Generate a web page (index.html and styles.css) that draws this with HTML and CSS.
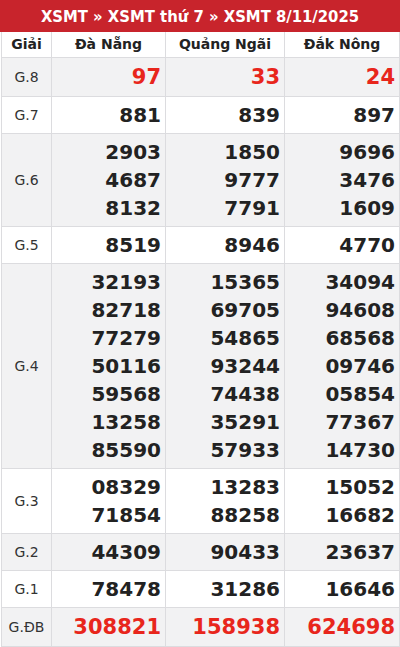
FILE: index.html
```html
<!DOCTYPE html>
<html lang="vi">
<head>
<meta charset="utf-8">
<link rel="stylesheet" href="styles.css">
</head>
<body>
<div class="box">
  <h2 class="title">XSMT » XSMT thứ 7 » XSMT 8/11/2025</h2>
  <table class="kq">
    <colgroup>
      <col class="c-g"><col class="c-1"><col class="c-2"><col class="c-3">
    </colgroup>
    <thead>
      <tr><th>Giải</th><th>Đà Nẵng</th><th>Quảng Ngãi</th><th>Đắk Nông</th></tr>
    </thead>
    <tbody>
      <tr class="alt"><td class="g">G.8</td><td class="n red">97</td><td class="n red">33</td><td class="n red">24</td></tr>
      <tr><td class="g">G.7</td><td class="n">881</td><td class="n">839</td><td class="n">897</td></tr>
      <tr class="alt"><td class="g">G.6</td><td class="n">2903<br>4687<br>8132</td><td class="n">1850<br>9777<br>7791</td><td class="n">9696<br>3476<br>1609</td></tr>
      <tr><td class="g">G.5</td><td class="n">8519</td><td class="n">8946</td><td class="n">4770</td></tr>
      <tr class="alt"><td class="g">G.4</td><td class="n">32193<br>82718<br>77279<br>50116<br>59568<br>13258<br>85590</td><td class="n">15365<br>69705<br>54865<br>93244<br>74438<br>35291<br>57933</td><td class="n">34094<br>94608<br>68568<br>09746<br>05854<br>77367<br>14730</td></tr>
      <tr><td class="g">G.3</td><td class="n">08329<br>71854</td><td class="n">13283<br>88258</td><td class="n">15052<br>16682</td></tr>
      <tr class="alt"><td class="g">G.2</td><td class="n">44309</td><td class="n">90433</td><td class="n">23637</td></tr>
      <tr><td class="g">G.1</td><td class="n">78478</td><td class="n">31286</td><td class="n">16646</td></tr>
      <tr class="alt"><td class="g">G.ĐB</td><td class="n red">308821</td><td class="n red">158938</td><td class="n red">624698</td></tr>
    </tbody>
  </table>
</div>
</body>
</html>
```
FILE: styles.css
```css
html, body {
  margin: 0;
  padding: 0;
  background: #fff;
}
body {
  font-family: "DejaVu Sans", sans-serif;
  color: #222;
}
.box {
  width: 400px;
}
.title {
  margin: 0;
  height: 32px;
  line-height: 33px;
  background: #c8242c;
  color: #fff;
  font-family: "DejaVu Sans Condensed", "DejaVu Sans", sans-serif;
  font-stretch: condensed;
  font-size: 16.5px;
  font-weight: bold;
  text-align: center;
}
.kq {
  width: 398px;
  margin: 0 1px;
  border-collapse: collapse;
  table-layout: fixed;
}
.c-g { width: 50px; }
.c-1 { width: 114px; }
.c-2 { width: 119px; }
.c-3 { width: 115px; }
.kq th, .kq td {
  border: 1px solid #dcdcdf;
  padding: 4px 4px;
}
.kq th {
  font-size: 14px;
  font-weight: bold;
  line-height: 17px;
  text-align: center;
  color: #222;
  border-top: 0;
}
.kq tr.alt td {
  background: #f2f2f3;
}
.g {
  text-align: center;
  font-size: 14px;
  color: #333;
  vertical-align: middle;
}
.n {
  text-align: right;
  font-size: 20px;
  font-weight: bold;
  line-height: 28px;
  color: #222;
  vertical-align: middle;
}
.n.red {
  color: #e8261c;
  font-size: 21px;
  line-height: 30px;
}
```
